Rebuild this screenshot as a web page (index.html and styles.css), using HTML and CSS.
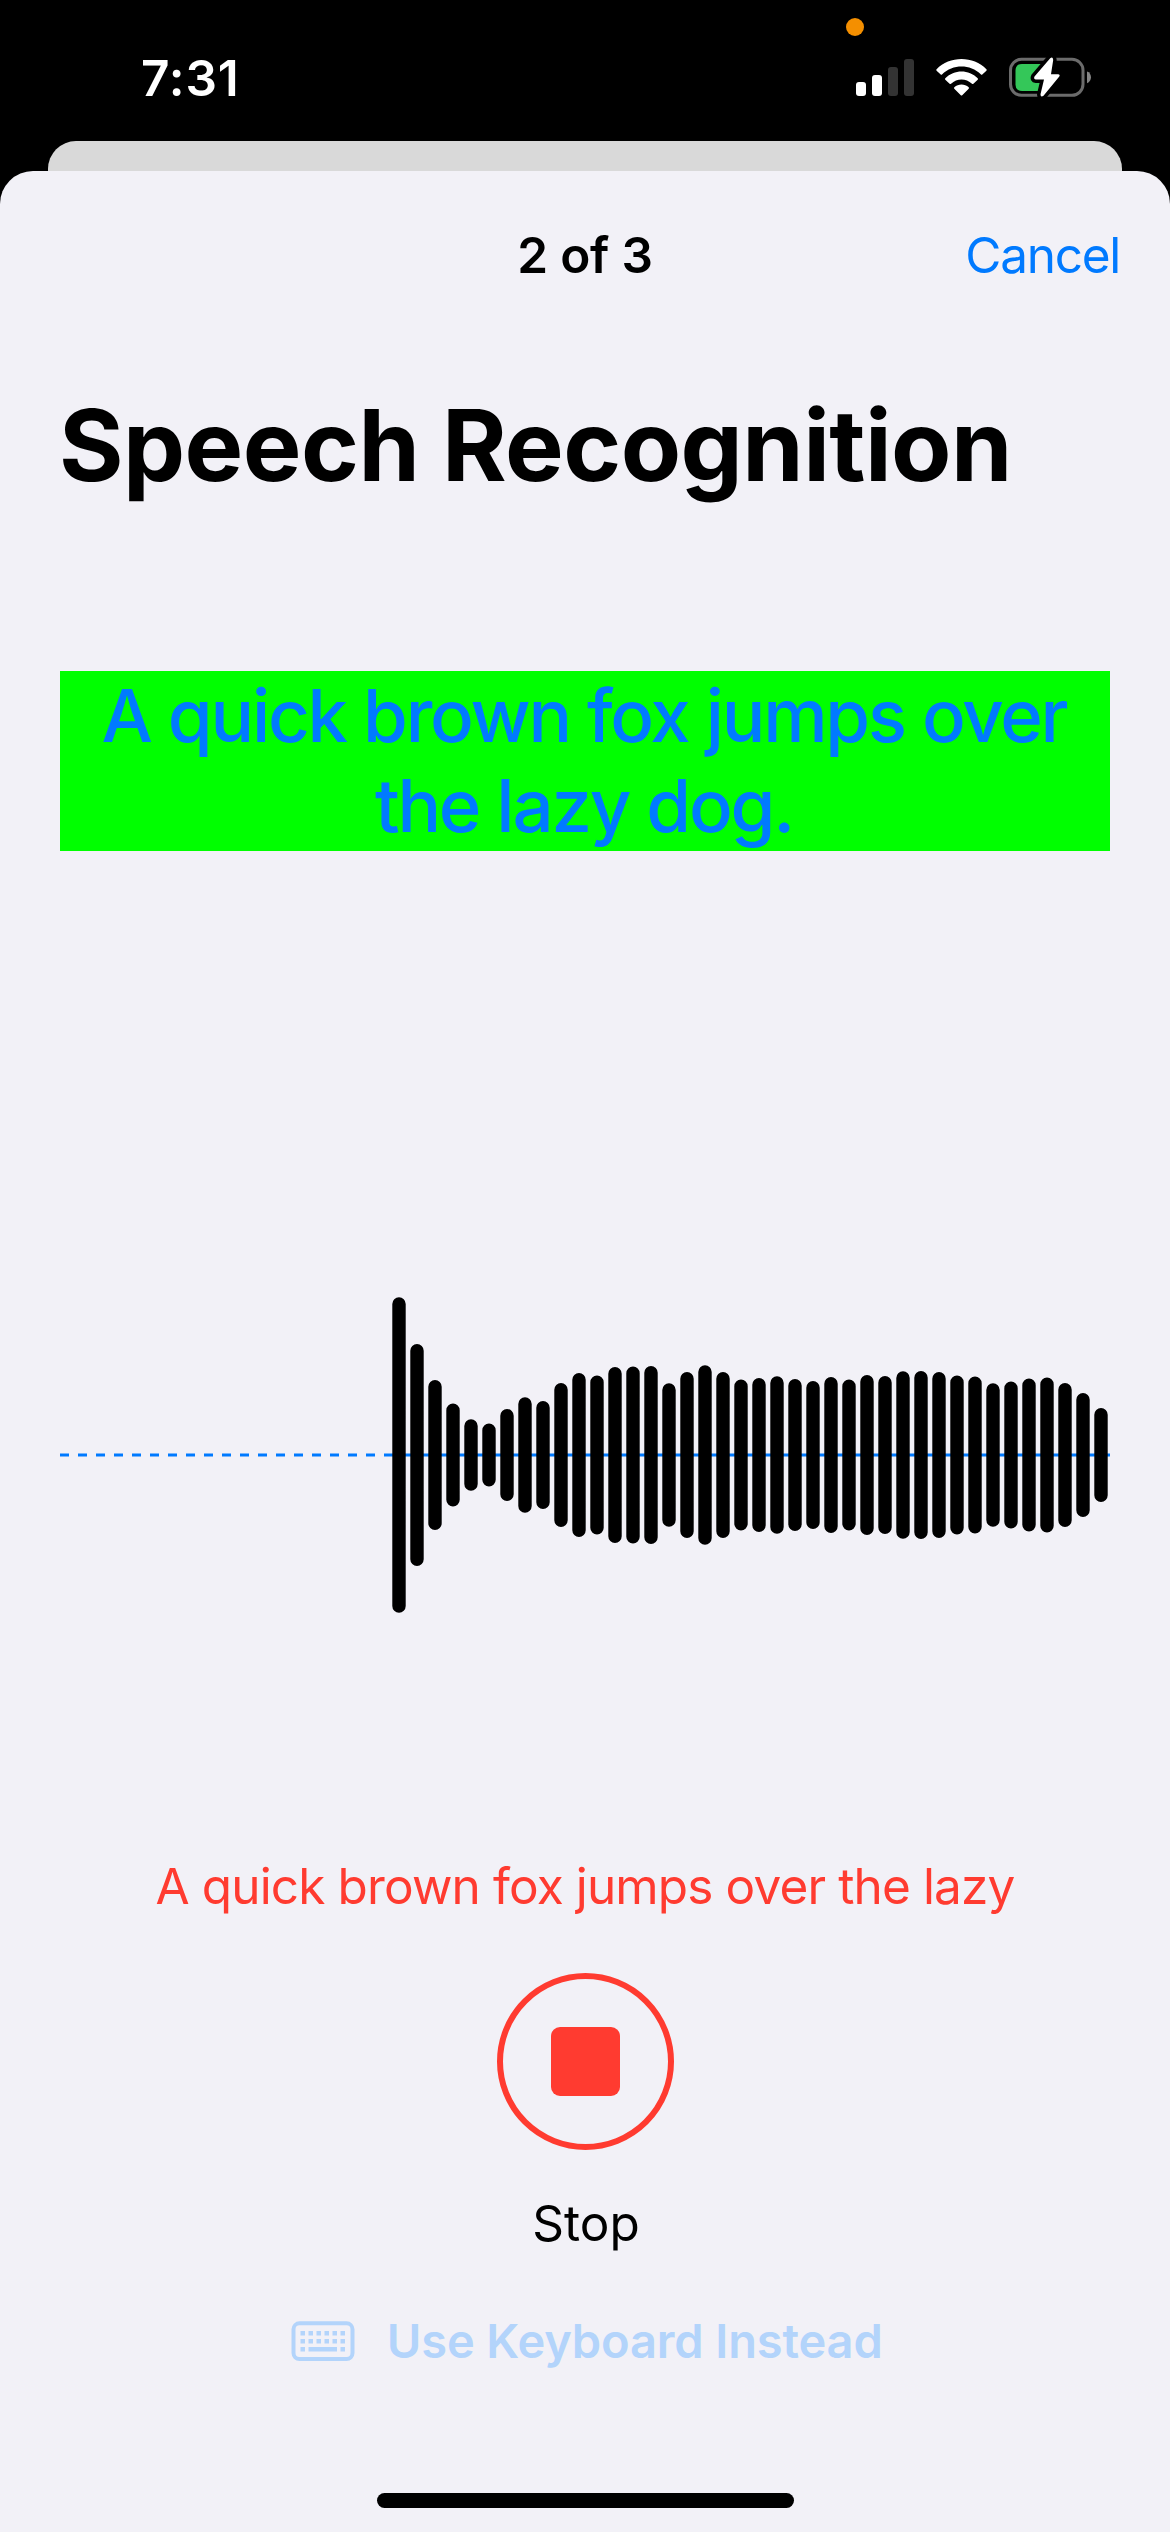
FILE: index.html
```html
<!DOCTYPE html>
<html lang="en">
<head>
<meta charset="utf-8">
<title>Speech Recognition</title>
<link rel="stylesheet" href="styles.css">
</head>
<body>
<header class="status">
  <span class="time">7:31</span>
  <span class="mic-dot"></span>
  <div class="status-icons">
    <svg class="signal" width="58" height="37" viewBox="0 0 58 37">
      <g fill="#fff"><rect x="0" y="23" width="10" height="14" rx="3"/><rect x="16" y="16" width="10" height="21" rx="3"/></g>
      <g fill="#333"><rect x="32" y="8" width="10" height="29" rx="3"/><rect x="48" y="0" width="10" height="37" rx="3"/></g>
    </svg>
    <svg class="wifi" width="51" height="37" viewBox="0 0 51 37" fill="#fff">
      <path d="M.6 10.3C13.500-3.4 37.500-3.4 50.400 10.300Q51 11 50.400 11.700L46.300 15.500Q45.600 16 45 15.400C34 5 17 5 6 15.400Q5.400 16 4.700 15.500L.6 11.700Q0 11 .6 10.300Z"/>
      <path d="M9.300 19.300C18.300 10.300 32.700 10.300 41.700 19.300Q42.300 20 41.700 20.700L37.400 24.700Q36.700 25.300 36 24.700C30 19 21 19 15 24.700Q14.300 25.300 13.600 24.700L9.300 20.700Q8.700 20 9.300 19.300Z"/>
      <path d="M18.300 28.300C22.400 24.600 28.600 24.600 32.700 28.300Q33.300 29 32.700 29.700L26.200 36.200Q25.500 36.900 24.800 36.200L18.300 29.700Q17.700 29 18.300 28.300Z"/>
    </svg>
    <svg class="battery" width="83" height="42" viewBox="0 0 83 42">
      <rect x="1.500" y="3.300" width="72.500" height="36" rx="11" fill="none" stroke="#6b6b6b" stroke-width="3"/>
      <path d="M78 15.500C83.300 17 83.300 25.500 78 27.200Z" fill="#848484"/>
      <path d="M13 8H41V35H13Q6.500 35 6.500 28.500V14.500Q6.500 8 13 8Z" fill="#34c759"/>
      <path d="M41.200 2.200L25.500 20.500Q24.200 23.200 27 23.500H35L31.500 38.200Q31.500 41.800 34.500 39.800L50.300 20.500Q51.500 18.500 49 18.300H42L44.200 4Q43.800 .2 41.200 2.200Z" fill="#fff" stroke="#000" stroke-width="7" stroke-linejoin="round" paint-order="stroke"/>
    </svg>
  </div>
</header>
<div class="back-card"></div>
<main class="sheet">
  <nav class="nav">
    <span class="step">2 of 3</span>
    <a class="cancel">Cancel</a>
  </nav>
  <h1 class="title">Speech Recognition</h1>
  <p class="prompt">A quick brown fox jumps over<br>the lazy dog.</p>
  <svg class="wave" width="1050" height="330" viewBox="0 -165 1050 330">
    <path class="baseline" d="M0 0H1050"/>
    <path class="bars" d="M339-151V151M357-104.300V104.300M375-68.300V68.300M393-44.700V44.700M411-29V29M429-24.700V24.700M447-39.300V39.300M465-51V51M483-47.300V47.300M501-65.300V65.300M519-75.300V75.300M537-72.700V72.700M555-81.300V81.300M573-81.700V81.700M591-82.300V82.300M609-65V65M627-76.300V76.300M645-83V83M663-76.300V76.300M681-68.700V68.700M699-70.300V70.300M717-72V72M735-69.300V69.300M753-67.300V67.300M771-71.300V71.300M789-68.700V68.700M807-73.300V73.300M825-72.300V72.300M843-77V77M861-77.300V77.300M879-76.300V76.300M897-72.700V72.700M915-71.700V71.700M933-65V65M951-66.700V66.700M969-69.700V69.700M987-70.700V70.700M1005-65.300V65.300M1023-55.300V55.300M1041-40.300V40.300"/>
  </svg>
  <p class="transcript">A quick brown fox jumps over the lazy</p>
  <button class="stop" aria-label="Stop"><span class="stop-square"></span></button>
  <p class="stop-label">Stop</p>
  <div class="keyboard">
    <svg width="64" height="40" viewBox="0 0 64 40" fill="#b3d4fb">
      <rect x="2.500" y="2.300" width="59" height="35.700" rx="6" fill="none" stroke="#b3d4fb" stroke-width="4"/>
      <path d="M9.500 10h4.500v4.500H9.500zM17.500 10h4.500v4.500h-4.500zM25.500 10h4.500v4.500h-4.500zM33.500 10h4.500v4.500h-4.500zM41.500 10h4.500v4.500h-4.500zM49.500 10h4.500v4.500h-4.500zM9.500 18h4.500v4.500H9.500zM17.500 18h4.500v4.500h-4.500zM25.500 18h4.500v4.500h-4.500zM33.500 18h4.500v4.500h-4.500zM41.500 18h4.500v4.500h-4.500zM49.500 18h4.500v4.500h-4.500zM9.500 26h4.500v4.500H9.500zM17.500 26h28.500v4.500H17.500zM49.500 26h4.500v4.500h-4.500z"/>
    </svg>
    <span class="keyboard-label">Use Keyboard Instead</span>
  </div>
  <div class="home"></div>
</main>
</body>
</html>
```
FILE: styles.css
```css
* { box-sizing: border-box; margin: 0; padding: 0; }

body {
  width: 1170px;
  height: 2532px;
  background: #000;
  color: #000;
  font-family: Inter, "Liberation Sans", sans-serif;
  overflow: hidden;
}

.status {
  position: relative;
  display: flex;
  justify-content: space-between;
  height: 141px;
  padding: 48px 78px 0 141px;
}

.time {
  color: #fff;
  font-size: 49.5px;
  font-weight: 600;
  letter-spacing: 0.9px;
  line-height: 60px;
}

.mic-dot {
  position: absolute;
  left: 846px;
  top: 18px;
  width: 18px;
  height: 18px;
  border-radius: 50%;
  background: #f48f00;
}

.status-icons { display: flex; align-items: flex-start; padding-top: 8px; }
.signal { margin-top: 3px; }
.wifi { margin: 3px 22px 0; }

.back-card {
  height: 30px;
  margin: 0 48px;
  border-radius: 28px 28px 0 0;
  background: #d9d9d9;
}

.sheet {
  display: flex;
  flex-direction: column;
  align-items: center;
  height: 2361px;
  padding: 0 60px;
  border-radius: 33px 33px 0 0;
  background: #f2f1f7;
}

.nav {
  display: grid;
  grid-template-columns: 1fr auto 1fr;
  align-items: center;
  width: 1070px;
  height: 168px;
  font-size: 49.5px;
  line-height: 60px;
}
.step { grid-column: 2; font-weight: 600; letter-spacing: -0.2px; }
.cancel { justify-self: end; color: #007aff; letter-spacing: -1.27px; }

.title {
  align-self: flex-start;
  margin: 45px 0 0 -1px;
  font-size: 98.6px;
  font-weight: 700;
  letter-spacing: -0.55px;
  line-height: 122px;
  white-space: nowrap;
}

.prompt {
  width: 1050px;
  height: 180px;
  margin-top: 165px;
  padding-right: 2px;
  background: #0f0;
  color: #007aff;
  font-size: 72.5px;
  font-weight: 500;
  letter-spacing: -2.2px;
  line-height: 90px;
  text-align: center;
  white-space: nowrap;
}

.wave { margin-top: 439px; }
.baseline { fill: none; stroke: #007aff; stroke-width: 3; stroke-dasharray: 9 9; }
.bars { fill: none; stroke: #000; stroke-width: 13.4; stroke-linecap: round; }

.transcript {
  margin-top: 236px;
  color: #ff3b30;
  font-size: 49.5px;
  letter-spacing: -0.87px;
  line-height: 60px;
  white-space: nowrap;
}

.stop {
  display: flex;
  align-items: center;
  justify-content: center;
  width: 177px;
  height: 177px;
  margin: 57px 0 0 1px;
  border: 6px solid #ff3b30;
  border-radius: 50%;
  background: none;
}
.stop-square { width: 69px; height: 69px; border-radius: 9px; background: #ff3b30; }

.stop-label { margin: 43px 0 0 2px; font-size: 49.5px; line-height: 60px; }

.keyboard {
  display: flex;
  align-items: center;
  gap: 31.5px;
  margin: 58px 0 0 4px;
  color: #b3d4fb;
  font-size: 47px;
  font-weight: 600;
  letter-spacing: -0.13px;
  line-height: 60px;
}

.home {
  width: 417px;
  height: 15px;
  margin: 122px 0 0 1px;
  border-radius: 8px;
  background: #000;
}
```
